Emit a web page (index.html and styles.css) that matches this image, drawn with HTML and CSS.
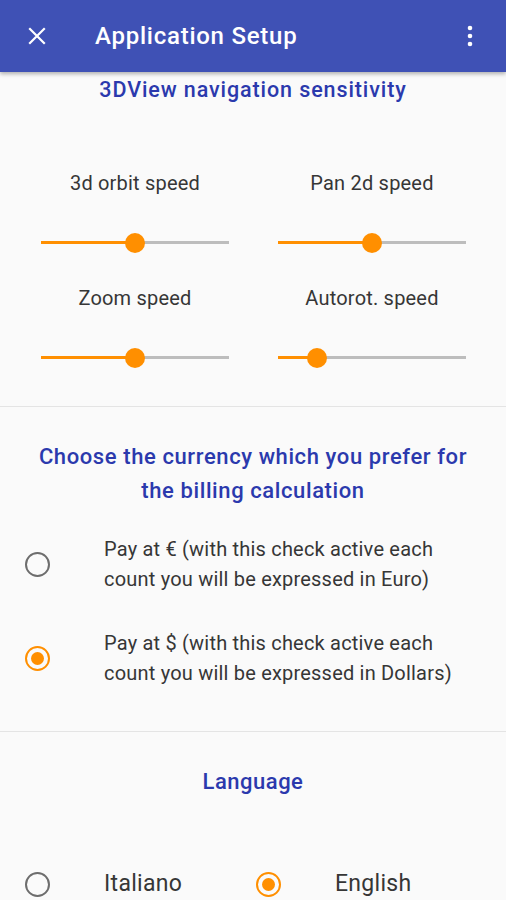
FILE: index.html
```html
<!DOCTYPE html>
<html lang="en">
<head>
    <meta charset="UTF-8">
    <meta name="viewport" content="width=device-width, initial-scale=1.0">
    <title>Application Setup</title>
    <link rel="stylesheet" href="styles.css">
</head>
<body>

    <header class="appbar">
        <button class="icon-btn close-btn" aria-label="Close">
            <svg width="24" height="24" viewBox="0 0 24 24">
                <path d="M5 5 L19 19 M19 5 L5 19" stroke="#fff" stroke-width="2.2" stroke-linecap="square"/>
            </svg>
        </button>
        <h1 class="appbar-title">Application Setup</h1>
        <button class="icon-btn menu-btn" aria-label="More">
            <svg width="24" height="24" viewBox="0 0 24 24">
                <circle cx="12" cy="4" r="2.3" fill="#fff"/>
                <circle cx="12" cy="12" r="2.3" fill="#fff"/>
                <circle cx="12" cy="20" r="2.3" fill="#fff"/>
            </svg>
        </button>
    </header>

    <main class="content">
        <!-- sensibilita navigazione -->
        <section class="section nav-section">
            <h2 class="section-title nav-title">3DView navigation sensitivity</h2>
            <div class="slider-grid">
                <div class="slider-cell">
                    <div class="slider-label">3d orbit speed</div>
                    <div class="slider">
                        <div class="slider-fill" style="width: 50%"></div>
                        <div class="slider-thumb" style="left: 50%"></div>
                    </div>
                </div>
                <div class="slider-cell">
                    <div class="slider-label">Pan 2d speed</div>
                    <div class="slider">
                        <div class="slider-fill" style="width: 50%"></div>
                        <div class="slider-thumb" style="left: 50%"></div>
                    </div>
                </div>
                <div class="slider-cell">
                    <div class="slider-label">Zoom speed</div>
                    <div class="slider">
                        <div class="slider-fill" style="width: 50%"></div>
                        <div class="slider-thumb" style="left: 50%"></div>
                    </div>
                </div>
                <div class="slider-cell">
                    <div class="slider-label">Autorot. speed</div>
                    <div class="slider">
                        <div class="slider-fill" style="width: 21%"></div>
                        <div class="slider-thumb" style="left: 21%"></div>
                    </div>
                </div>
            </div>
        </section>

        <!-- valuta -->
        <section class="section currency-section">
            <h2 class="section-title multi">Choose the currency which you prefer for the billing calculation</h2>
            <div class="option-list">
                <label class="option">
                    <span class="radio"></span>
                    <span class="option-text">Pay at € (with this check active each count you will be expressed in Euro)</span>
                </label>
                <label class="option">
                    <span class="radio checked"></span>
                    <span class="option-text">Pay at $ (with this check active each count you will be expressed in Dollars)</span>
                </label>
            </div>
        </section>

        <!-- lingua -->
        <section class="section language-section">
            <h2 class="section-title">Language</h2>
            <div class="language-row">
                <label class="option">
                    <span class="radio"></span>
                    <span class="option-text">Italiano</span>
                </label>
                <label class="option">
                    <span class="radio checked"></span>
                    <span class="option-text">English</span>
                </label>
            </div>
        </section>
    </main>

</body>
</html>
```

FILE: styles.css
```css
body {
    margin: 0;
    font-family: Roboto, 'Noto Sans', sans-serif;
    background-color: #fafafa;
    color: #363636;
    height: 900px;
    overflow: hidden;
}
.appbar {
    height: 72px;
    background-color: #3f51b5;
    display: flex;
    align-items: center;
    box-shadow: 0 2px 4px rgba(0, 0, 0, 0.3);
    position: relative;
    z-index: 1;
}
.icon-btn {
    background: none;
    border: none;
    padding: 0;
    width: 24px;
    height: 24px;
    cursor: pointer;
}
.close-btn {
    margin-left: 25px;
}
.appbar-title {
    flex: 1;
    margin: 0 0 0 46px;
    font-size: 24px;
    font-weight: 500;
    color: #fff;
    letter-spacing: 0.75px;
}
.menu-btn {
    margin-right: 24px;
}
.section {
    border-bottom: 1px solid #e4e4e4;
}
.section-title {
    margin: 0;
    text-align: center;
    font-size: 22px;
    font-weight: 500;
    line-height: 28px;
    letter-spacing: 0.5px;
    color: #2b39ad;
}
.nav-title {
    font-size: 21.5px;
    letter-spacing: 0.9px;
}
.section-title.multi {
    line-height: 34px;
    padding: 0 28px;
    letter-spacing: 0.6px;
}
.nav-section {
    padding-top: 4px;
}
.slider-grid {
    display: grid;
    grid-template-columns: 188px 188px;
    column-gap: 49px;
    row-gap: 26px;
    padding: 65px 0 33px 41px;
}
.slider-label {
    text-align: center;
    font-size: 20px;
    line-height: 28px;
    letter-spacing: 0.2px;
}
.slider {
    position: relative;
    height: 3px;
    margin: 44px 0 14px;
    background-color: #bdbdbd;
}
.slider-fill {
    height: 100%;
    background-color: #ff8f00;
}
.slider-thumb {
    position: absolute;
    top: 50%;
    width: 20px;
    height: 20px;
    margin: -10px 0 0 -10px;
    border-radius: 50%;
    background-color: #ff8f00;
}
.currency-section {
    padding: 33px 0 43px;
}
.option-list {
    display: flex;
    flex-direction: column;
    gap: 34px;
    margin-top: 26px;
}
.option {
    display: flex;
    align-items: center;
    padding-left: 25px;
}
.radio {
    flex: none;
    width: 21px;
    height: 21px;
    border: 2.5px solid #6d6d6d;
    border-radius: 50%;
    margin-right: 54px;
    position: relative;
}
.radio.checked {
    border-color: #ff8f00;
}
.radio.checked::after {
    content: '';
    position: absolute;
    top: 4px;
    left: 4px;
    width: 13px;
    height: 13px;
    border-radius: 50%;
    background-color: #ff8f00;
}
.option-text {
    font-size: 20px;
    line-height: 30px;
    letter-spacing: 0.2px;
    padding-right: 30px;
}
.language-section {
    border-bottom: none;
    padding-top: 36px;
}
.language-row {
    display: grid;
    grid-template-columns: 231px 1fr;
    margin-top: 73px;
}
.language-row .option-text {
    font-size: 23px;
    letter-spacing: 0.3px;
}
```
